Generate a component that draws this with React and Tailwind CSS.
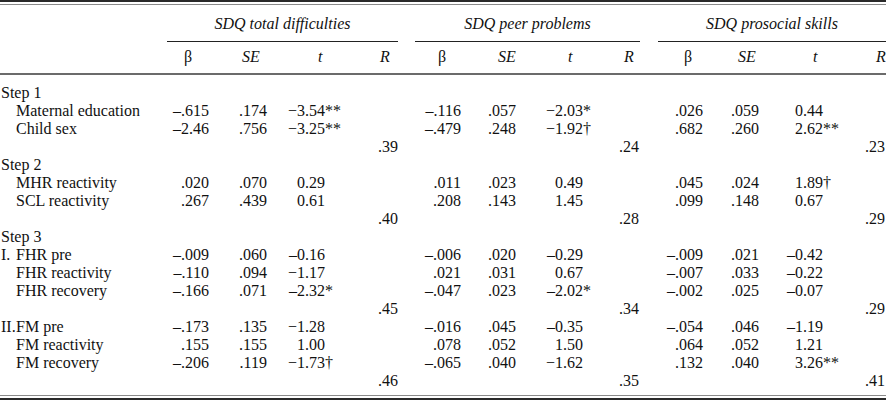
const cols =
  'grid grid-cols-[160px_52px_58px_80px_50px_15px_49px_55px_81px_42px_16px_48px_56px_88px_36px]';

const groups = [
  { name: 'SDQ total difficulties', tw: 'w-[55px]' },
  { name: 'SDQ peer problems', tw: 'w-[64px]' },
  { name: 'SDQ prosocial skills', tw: 'w-[61px]' },
];

const rows = [
  { type: 'step', label: 'Step 1' },
  { label: 'Maternal education', v: [['–.615', '.174', '−3.54', '**'], ['–.116', '.057', '−2.03', '*'], ['.026', '.059', '0.44', '']] },
  { label: 'Child sex', v: [['–2.46', '.756', '−3.25', '**'], ['–.479', '.248', '−1.92', '†'], ['.682', '.260', '2.62', '**']] },
  { type: 'r', r: ['.39', '.24', '.23'] },
  { type: 'step', label: 'Step 2' },
  { label: 'MHR reactivity', v: [['.020', '.070', '0.29', ''], ['.011', '.023', '0.49', ''], ['.045', '.024', '1.89', '†']] },
  { label: 'SCL reactivity', v: [['.267', '.439', '0.61', ''], ['.208', '.143', '1.45', ''], ['.099', '.148', '0.67', '']] },
  { type: 'r', r: ['.40', '.28', '.29'] },
  { type: 'step', label: 'Step 3' },
  { prefix: 'I.', label: 'FHR pre', v: [['–.009', '.060', '–0.16', ''], ['–.006', '.020', '–0.29', ''], ['–.009', '.021', '–0.42', '']] },
  { label: 'FHR reactivity', v: [['–.110', '.094', '−1.17', ''], ['.021', '.031', '0.67', ''], ['–.007', '.033', '–0.22', '']] },
  { label: 'FHR recovery', v: [['–.166', '.071', '–2.32', '*'], ['–.047', '.023', '–2.02', '*'], ['–.002', '.025', '–0.07', '']] },
  { type: 'r', r: ['.45', '.34', '.29'] },
  { prefix: 'II.', label: 'FM pre', v: [['–.173', '.135', '−1.28', ''], ['–.016', '.045', '–0.35', ''], ['–.054', '.046', '–1.19', '']] },
  { label: 'FM reactivity', v: [['.155', '.155', '1.00', ''], ['.078', '.052', '1.50', ''], ['.064', '.052', '1.21', '']] },
  { label: 'FM recovery', v: [['–.206', '.119', '−1.73', '†'], ['–.065', '.040', '−1.62', ''], ['.132', '.040', '3.26', '**']] },
  { type: 'r', r: ['.46', '.35', '.41'] },
];

function Label({ row }) {
  if (row.type === 'step') return <div className="pl-[1px]">{row.label}</div>;
  if (row.type === 'r') return <div />;
  return (
    <div className="flex pl-[1px]">
      <span className="w-[15px] shrink-0">{row.prefix || ''}</span>
      <span>{row.label}</span>
    </div>
  );
}

function GroupCells({ vals, r, g, last }) {
  const rPad = ['pr-[2px]', 'pr-[3px]', 'pr-[1px]'][g];
  return (
    <>
      <div className="text-right pr-[3px]">{vals ? vals[0] : ''}</div>
      <div className="text-right pr-[3px]">{vals ? vals[1] : ''}</div>
      <div className="flex">
        <span className={`${groups[g].tw} shrink-0 text-right`}>{vals ? vals[2] : ''}</span>
        <span>{vals ? vals[3] : ''}</span>
      </div>
      <div className={`text-right ${rPad}`}>{r || ''}</div>
      {!last && <div />}
    </>
  );
}

export default function App() {
  return (
    <div className="w-[886px] h-[400px] bg-white text-[#111] text-[16px] font-['Liberation_Serif',serif] overflow-hidden">
      <div className="h-[2px] bg-[#2a2a2a]" />
      <div className="h-[2px]" />
      <div className="h-[1px] bg-[#8a8a8a]" />

      {/* group titles */}
      <div className={`${cols} pt-[10px] leading-[18px] italic`}>
        <div />
        <div className="col-span-4 ml-[7px] mr-[2px] pb-[8px] border-b border-[#222] text-center">{groups[0].name}</div>
        <div />
        <div className="col-span-4 mr-[2px] pb-[8px] border-b border-[#222] text-center">{groups[1].name}</div>
        <div />
        <div className="col-span-4 pb-[8px] border-b border-[#222] text-center">{groups[2].name}</div>
      </div>

      {/* column heads */}
      <div className={`${cols} pt-[6px] pb-[7px] leading-[18px] border-b-2 border-[#6b6b6b]`}>
        <div />
        <div className="pl-[24px]">β</div>
        <div className="pl-[30px] italic">SE</div>
        <div className="pl-[48px] italic">t</div>
        <div className="pl-[30px] italic">R</div>
        <div />
        <div className="pl-[23px]">β</div>
        <div className="pl-[34px] italic">SE</div>
        <div className="pl-[49px] italic">t</div>
        <div className="pl-[24px] italic">R</div>
        <div />
        <div className="pl-[26px]">β</div>
        <div className="pl-[32px] italic">SE</div>
        <div className="pl-[51px] italic">t</div>
        <div className="pl-[26px] italic">R</div>
      </div>

      {/* body */}
      <div className="pt-[9px] pb-[5px]">
        {rows.map((row, i) => (
          <div key={i} className={`${cols} h-[18px] leading-[18px] whitespace-nowrap`}>
            <Label row={row} />
            {[0, 1, 2].map((g) => (
              <GroupCells
                key={g}
                g={g}
                last={g === 2}
                vals={row.v ? row.v[g] : null}
                r={row.type === 'r' ? row.r[g] : null}
              />
            ))}
          </div>
        ))}
      </div>

      <div className="h-[1px] bg-[#8a8a8a]" />
      <div className="h-[2px]" />
      <div className="h-[2px] bg-[#2a2a2a]" />
    </div>
  );
}
